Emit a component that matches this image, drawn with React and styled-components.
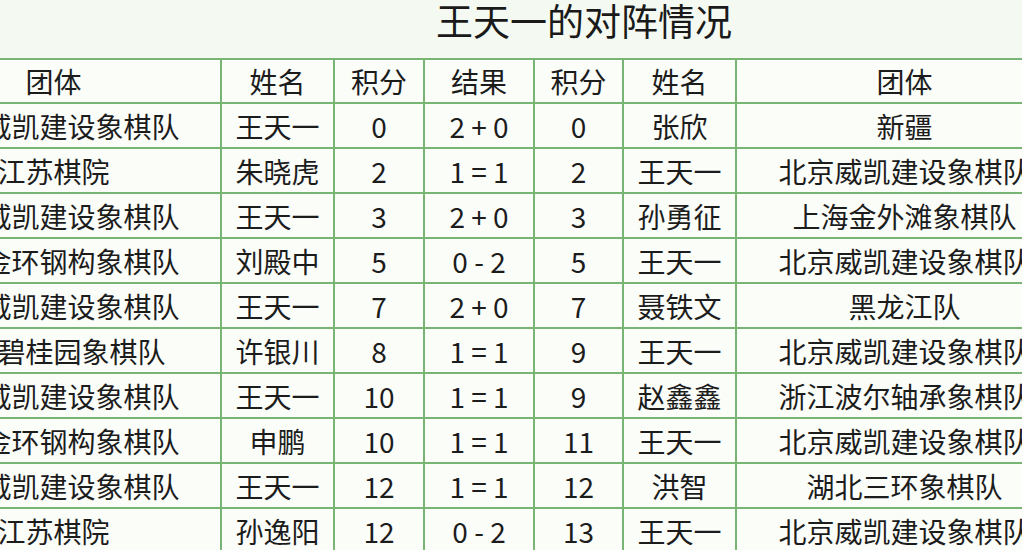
import React from "react";
import styled, { createGlobalStyle } from "styled-components";

const Global = createGlobalStyle`
  html, body { margin: 0; padding: 0; }
  body {
    background: #f4faf2;
    font-family: "Noto Sans CJK SC", "Noto Sans", sans-serif;
    color: #1c1c1c;
    overflow: hidden;
  }
`;

const Page = styled.div`
  width: 1022px;
  height: 550px;
  overflow: hidden;
  background: #f4faf2;
`;

const Title = styled.h1`
  margin: 0;
  height: 58px;
  padding-left: 436px;
  font-size: 37px;
  font-weight: 400;
  line-height: 40px;
  color: #1a1a1a;
  white-space: nowrap;
`;

const Grid = styled.div`
  display: grid;
  grid-template-columns: 333px 111px 88px 108px 87px 111px 335px;
  grid-template-rows: 42px;
  grid-auto-rows: 43px;
  gap: 2px;
  padding: 2px;
  width: max-content;
  margin-left: -115px;
  background: #78b575;
`;

const Cell = styled.div`
  display: flex;
  align-items: center;
  justify-content: center;
  background: #fbfdf9;
  font-size: 28px;
  line-height: 1;
  white-space: nowrap;
  overflow: hidden;
  color: #1c1c1c;
`;

const headers = ["团体", "姓名", "积分", "结果", "积分", "姓名", "团体"];

const rows = [
  ["北京威凯建设象棋队", "王天一", "0", "2 + 0", "0", "张欣", "新疆"],
  ["江苏棋院", "朱晓虎", "2", "1 = 1", "2", "王天一", "北京威凯建设象棋队"],
  ["北京威凯建设象棋队", "王天一", "3", "2 + 0", "3", "孙勇征", "上海金外滩象棋队"],
  ["浙江金环钢构象棋队", "刘殿中", "5", "0 - 2", "5", "王天一", "北京威凯建设象棋队"],
  ["北京威凯建设象棋队", "王天一", "7", "2 + 0", "7", "聂铁文", "黑龙江队"],
  ["广东碧桂园象棋队", "许银川", "8", "1 = 1", "9", "王天一", "北京威凯建设象棋队"],
  ["北京威凯建设象棋队", "王天一", "10", "1 = 1", "9", "赵鑫鑫", "浙江波尔轴承象棋队"],
  ["浙江金环钢构象棋队", "申鹏", "10", "1 = 1", "11", "王天一", "北京威凯建设象棋队"],
  ["北京威凯建设象棋队", "王天一", "12", "1 = 1", "12", "洪智", "湖北三环象棋队"],
  ["江苏棋院", "孙逸阳", "12", "0 - 2", "13", "王天一", "北京威凯建设象棋队"],
];

export default function App() {
  return (
    <Page>
      <Global />
      <Title>王天一的对阵情况</Title>
      <Grid>
        {headers.map((h, i) => (
          <Cell key={"h" + i}>{h}</Cell>
        ))}
        {rows.map((r, ri) =>
          r.map((c, ci) => <Cell key={ri + "-" + ci}>{c}</Cell>)
        )}
      </Grid>
    </Page>
  );
}
